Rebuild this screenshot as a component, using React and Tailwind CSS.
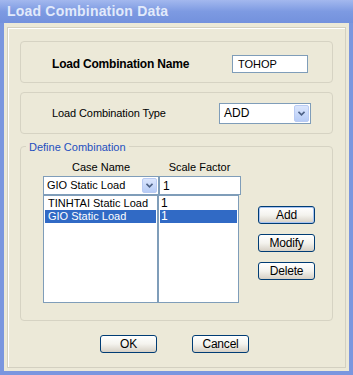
const font = { fontFamily: '"Liberation Sans", Arial, sans-serif' };

const ComboArrow = () => (
  <span className="flex h-full w-[15px] items-center justify-center rounded-[2px] border border-[#b9cbf3] bg-gradient-to-b from-[#dbe6fd] to-[#b7ccf6]">
    <svg width="7" height="5" viewBox="0 0 7 5">
      <path d="M0.5 0.8 L3.5 3.8 L6.5 0.8" fill="none" stroke="#4d6185" strokeWidth="1.6" />
    </svg>
  </span>
);

const XpButton = ({ children, active }) => (
  <button
    className={
      "flex h-[18px] w-[57px] items-center justify-center rounded-[3px] border border-[#003c74] bg-gradient-to-b from-[#ffffff] via-[#f4f3ee] to-[#d6d0c5] text-[12px] tracking-[-0.2px] text-black " +
      (active ? "shadow-[inset_0_0_0_1px_#a8c4f2]" : "")
    }
  >
    {children}
  </button>
);

export default function App() {
  return (
    <div className="flex h-[375px] w-[353px] flex-col whitespace-nowrap bg-[#7a96df]" style={font}>
      {/* title bar */}
      <div className="flex h-[23px] items-center bg-gradient-to-b from-[#a3b8ee] via-[#7d9ae2] to-[#7391dd] pl-[7px]">
        <span className="text-[14px] font-bold tracking-[0.2px] text-[#e2eafb]">Load Combination Data</span>
      </div>

      <div className="mx-[4px] mb-[4px] flex flex-1 flex-col bg-[#ece9d8] px-[3px] pt-[4px] pb-[3px]">
        <div className="flex flex-1 flex-col border border-[#d3d0c1] shadow-[inset_1px_1px_0_#ffffff] px-[12px] pt-[13px]">
          {/* name */}
          <div className="flex h-[42px] items-center rounded-[4px] border border-[#d6d3c3] pl-[31px] pr-[24px] pt-[4px]">
            <span className="flex-1 text-[12px] font-bold tracking-[-0.2px] text-black">Load Combination Name</span>
            <div className="flex h-[18px] w-[76px] items-center border border-[#7f9db9] bg-white pl-[5px] text-[11px] text-black">
              TOHOP
            </div>
          </div>

          {/* type */}
          <div className="mt-[9px] flex h-[42px] items-center rounded-[4px] border border-[#d6d3c3] pl-[31px] pr-[21px]">
            <span className="flex-1 text-[11px] tracking-[-0.1px] text-black">Load Combination Type</span>
            <div className="flex h-[21px] w-[92px] items-center border border-[#7f9db9] bg-white p-[1px]">
              <span className="flex-1 pl-[3px] text-[12px] text-black">ADD</span>
              <ComboArrow />
            </div>
          </div>

          {/* define combination */}
          <div className="relative mt-[12px] h-[175px] rounded-[4px] border border-[#d6d3c3]">
            <span className="absolute -top-[8px] left-[5px] bg-[#ece9d8] px-[3px] text-[11px] text-[#1f4fbf]">
              Define Combination
            </span>
            <div className="flex pl-[22px] pt-[12px]">
              <div className="flex flex-col">
                <div className="flex h-[16px] text-[11px] text-black">
                  <span className="w-[116px] text-center">Case Name</span>
                  <span className="w-[81px] text-center">Scale Factor</span>
                </div>
                <div className="mt-[1px] flex h-[19px]">
                  <div className="flex w-[116px] items-center border border-[#7f9db9] bg-white p-[1px]">
                    <span className="flex-1 pl-[2px] text-[11px] text-black">GIO Static Load</span>
                    <ComboArrow />
                  </div>
                  <div className="flex w-[82px] items-center border border-[#7f9db9] bg-white pl-[3px] text-[12px] text-black">
                    1
                  </div>
                </div>
                <div className="flex h-[108px]">
                  <div className="flex w-[116px] flex-col border border-r-2 border-[#7f9db9] bg-white p-[1px] text-[11px] leading-[13px] text-black">
                    <span className="pl-[3px]">TINHTAI Static Load</span>
                    <span className="bg-[#316ac5] pl-[3px] text-white">GIO Static Load</span>
                  </div>
                  <div className="flex w-[80px] flex-col border border-l-0 border-[#7f9db9] bg-white p-[1px] text-[12px] leading-[13px] text-black">
                    <span className="pl-[1px]">1</span>
                    <span className="bg-[#316ac5] pl-[1px] text-white">1</span>
                  </div>
                </div>
              </div>
              <div className="ml-[17px] flex flex-col gap-[10px] pt-[47px]">
                <XpButton active>Add</XpButton>
                <XpButton>Modify</XpButton>
                <XpButton>Delete</XpButton>
              </div>
            </div>
          </div>

          {/* ok / cancel */}
          <div className="mt-[14px] flex justify-center gap-[35px] pr-[4px]">
            <XpButton>OK</XpButton>
            <XpButton>Cancel</XpButton>
          </div>
        </div>
      </div>
    </div>
  );
}
